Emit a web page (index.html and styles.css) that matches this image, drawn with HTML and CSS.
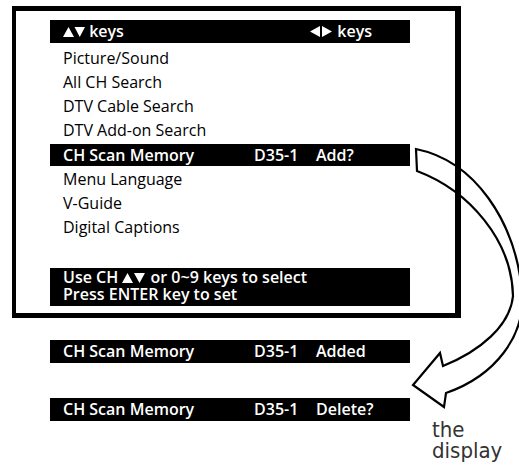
FILE: index.html
```html
<!DOCTYPE html>
<html lang="en">
<head>
  <meta charset="UTF-8">
  <title>CH Scan Memory</title>
  <link rel="stylesheet" href="styles.css">
</head>
<body>
  <div class="page">
    <!-- kurvepil fra valgt linje ned til status-linjene -->
    <svg class="arrow" width="519" height="468" viewBox="0 0 519 468">
      <path d="M416,143 C475,155 515,215 522,285 C526,330 495,370 446,387 L444,401 L413,379 L440,347 L443,360 C480,345 510,320 513,290 C512,235 470,185 417,165 Z"
            fill="#fff" stroke="#000" stroke-width="2.2" stroke-linejoin="miter"/>
    </svg>

    <div class="osd">
      <div class="bar head">
        <span class="key">
          <svg class="tri" width="22" height="10" viewBox="0 0 22 10"><path d="M0,10 L5.5,0 L11,10 Z M11.5,0 L22,0 L16.75,10 Z" fill="#fff"/></svg>
          keys
        </span>
        <span class="key">
          <svg class="tri" width="23" height="11" viewBox="0 0 23 11"><path d="M0,5.5 L10,0 L10,11 Z M12,0 L22,5.5 L12,11 Z" fill="#fff"/></svg>
          keys
        </span>
      </div>
      <ul class="menu">
        <li>Picture/Sound</li>
        <li>All CH Search</li>
        <li>DTV Cable Search</li>
        <li>DTV Add-on Search</li>
        <li class="bar sel"><span>CH Scan Memory</span><span>D35-1</span><span>Add?</span></li>
        <li>Menu Language</li>
        <li>V-Guide</li>
        <li>Digital Captions</li>
      </ul>
      <div class="bar help">
        Use CH <svg class="tri" width="24" height="10" viewBox="0 0 24 10"><path d="M0,10 L5.5,0 L11,10 Z M12,0 L23,0 L17.5,10 Z" fill="#fff"/></svg> or 0~9 keys to select<br>
        Press ENTER key to set
      </div>
    </div>

    <div class="bar status added"><span>CH Scan Memory</span><span>D35-1</span><span>Added</span></div>
    <div class="bar status deleted"><span>CH Scan Memory</span><span>D35-1</span><span>Delete?</span></div>

    <p class="caption">the<br>display</p>
  </div>
</body>
</html>
```

FILE: styles.css
```css
/* Generell stil */
body {
  margin: 0;
  background-color: #fff;
  color: #000;
  font-family: "Open Sans", sans-serif;
  font-size: 16px;
  width: 519px;
  height: 468px;
  overflow: hidden;
}
.page {
  position: relative;
}
.arrow {
  position: absolute;
  left: 0;
  top: 0;
  z-index: 0;
}

/* OSD-boksen */
.osd {
  position: relative;
  z-index: 1;
  box-sizing: border-box;
  width: 449px;
  margin: 6px 0 0 12px;
  border-style: solid;
  border-color: #000;
  border-width: 5px 6px 5px 4px;
  padding: 9px 0 7px 34px;
}
.bar {
  box-sizing: border-box;
  width: 360px;
  background-color: #000;
  color: #fff;
  font-weight: 600;
  padding-left: 13px;
}
.tri {
  display: inline-block;
  vertical-align: baseline;
}
.head {
  display: flex;
  justify-content: space-between;
  height: 23px;
  line-height: 23px;
  padding-right: 38px;
}
.menu {
  list-style: none;
  margin: 3px 0 29px;
  padding: 0;
}
.menu li {
  height: 24px;
  line-height: 24px;
  padding-left: 13px;
  font-weight: 500;
}
.menu li.sel {
  height: 22px;
  line-height: 22px;
  margin: 2px 0 1px;
  font-weight: 600;
}
.sel, .status {
  display: grid;
  grid-template-columns: 191px 62px auto;
}
.help {
  line-height: 17px;
  padding: 1px 13px 3px;
}

/* Status-linjer under boksen */
.status {
  height: 23px;
  line-height: 23px;
  margin-left: 50px;
}
.added {
  margin-top: 22px;
}
.deleted {
  margin-top: 35px;
}
.caption {
  margin: -2px 0 0 432px;
  font-family: "DejaVu Sans Condensed", "DejaVu Sans", sans-serif;
  font-size: 22px;
  line-height: 21px;
  color: #333;
  white-space: nowrap;
}
```
